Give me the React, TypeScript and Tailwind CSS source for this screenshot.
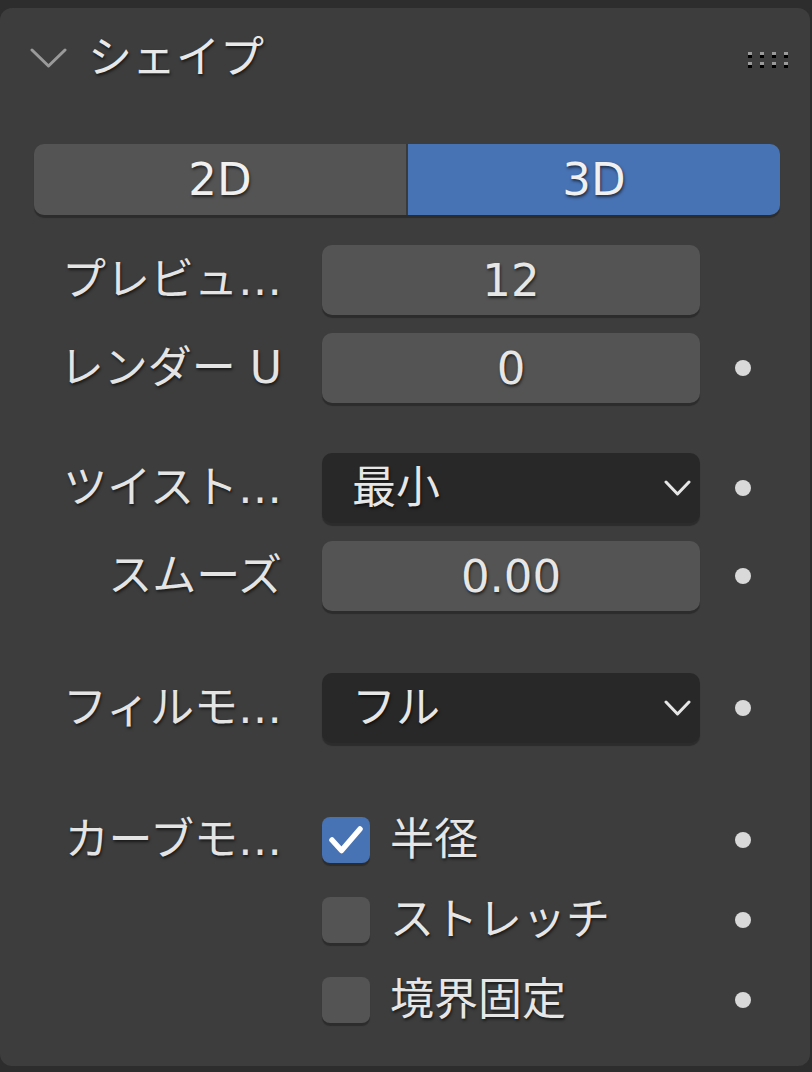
import { useState } from 'react';

const font = { fontFamily: '"DejaVu Sans", "Noto Sans CJK JP", sans-serif' };

function Dot({ show = true }: { show?: boolean }) {
  return (
    <div className="ml-[35px] w-4 h-4 flex items-center justify-center">
      {show && <div className="w-4 h-4 rounded-full bg-[#d9d9d9]" />}
    </div>
  );
}

function Label({ text }: { text: string }) {
  return (
    <div className="w-[248px] text-right text-[44px] leading-none text-[#e4e4e4] [text-shadow:1px_2px_3px_rgba(0,0,0,0.6)] whitespace-nowrap">
      {text}
    </div>
  );
}

function NumberRow({ label, value, dot = true, className = '' }: { label: string; value: string; dot?: boolean; className?: string }) {
  return (
    <div className={`flex items-center ${className}`}>
      <Label text={label} />
      <div className="ml-[40px] w-[378px] h-[70px] rounded-[10px] bg-[#545454] shadow-[0_3px_1px_rgba(0,0,0,0.28)] flex items-center justify-center text-[45px] leading-none text-[#e6e6e6] [text-shadow:1px_2px_3px_rgba(0,0,0,0.6)]">
        {value}
      </div>
      <Dot show={dot} />
    </div>
  );
}

function SelectRow({ label, value, className = '' }: { label: string; value: string; className?: string }) {
  return (
    <div className={`flex items-center ${className}`}>
      <Label text={label} />
      <div className="ml-[40px] w-[378px] h-[70px] rounded-[10px] bg-[#282828] shadow-[0_3px_1px_rgba(0,0,0,0.28)] flex items-center pl-[30px] pr-[9px]">
        <span className="flex-1 text-[44px] leading-none text-[#e6e6e6] [text-shadow:1px_2px_3px_rgba(0,0,0,0.6)]">{value}</span>
        <svg width="27" height="16" viewBox="0 0 27 16" fill="none">
          <polyline points="2,2 13.5,14 25,2" stroke="#e6e6e6" strokeWidth="3" strokeLinecap="round" strokeLinejoin="round" />
        </svg>
      </div>
      <Dot />
    </div>
  );
}

function CheckRow({ label, text, checked, className = '' }: { label: string; text: string; checked: boolean; className?: string }) {
  return (
    <div className={`flex items-center h-[46px] ${className}`}>
      <Label text={label} />
      <div className="ml-[40px] w-[378px] flex items-center">
        <div
          className={`w-[48px] h-[46px] rounded-[8px] shadow-[0_3px_1px_rgba(0,0,0,0.28)] flex items-center justify-center ${
            checked ? 'bg-[#4772b3]' : 'bg-[#545454]'
          }`}
        >
          {checked && (
            <svg width="48" height="46" viewBox="0 0 48 46" fill="none">
              <polyline points="10,23 19.5,33.5 38,12" stroke="#ffffff" strokeWidth="5.5" strokeLinecap="round" strokeLinejoin="round" />
            </svg>
          )}
        </div>
        <span className="ml-[20px] text-[44px] leading-none text-[#e6e6e6] [text-shadow:1px_2px_3px_rgba(0,0,0,0.6)]">{text}</span>
      </div>
      <Dot />
    </div>
  );
}

export default function App() {
  const [mode, setMode] = useState<'2D' | '3D'>('3D');

  return (
    <div className="w-[812px] h-[1072px] bg-[#2d2d2d] pt-[8px] pr-[2px] overflow-hidden" style={font}>
      <div className="h-[1058px] bg-[#3d3d3d] rounded-[12px]">
        {/* Header */}
        <div className="h-[100px] flex items-center pl-[30px] pr-[22px]">
          <svg width="37" height="20" viewBox="0 0 37 20" fill="none">
            <polyline points="2,2 18.5,18 35,2" stroke="#9a9a9a" strokeWidth="3" strokeLinecap="round" strokeLinejoin="round" />
          </svg>
          <span className="ml-[21px] flex-1 text-[44px] leading-none text-[#e8e8e8] [text-shadow:1px_2px_3px_rgba(0,0,0,0.6)]">シェイプ</span>
          <div className="grid grid-cols-4 gap-x-[8px] gap-y-[7px]">
            {Array.from({ length: 8 }).map((_, i) => (
              <div key={i} className="w-[4px] h-[3px] bg-[#9a9a9a] shadow-[0_3px_0_#000]" />
            ))}
          </div>
        </div>

        <div className="pl-[34px]">
          {/* 2D / 3D toggle */}
          <div className="mt-[36px] w-[746px] h-[71px] flex rounded-[10px] shadow-[0_3px_1px_rgba(0,0,0,0.28)] overflow-hidden">
            {(['2D', '3D'] as const).map((m, i) => (
              <button
                key={m}
                onClick={() => setMode(m)}
                className={`flex-1 flex items-center justify-center text-[45px] leading-none text-[#f0f0f0] [text-shadow:1px_2px_3px_rgba(0,0,0,0.6)] ${
                  mode === m ? 'bg-[#4772b3]' : 'bg-[#545454]'
                } ${i === 0 ? 'border-r-2 border-[#3a3a3a]' : ''}`}
              >
                {m}
              </button>
            ))}
          </div>

          <NumberRow className="mt-[30px]" label="プレビュ…" value="12" dot={false} />
          <NumberRow className="mt-[18px]" label="レンダー U" value="0" />

          <SelectRow className="mt-[50px]" label="ツイスト…" value="最小" />
          <NumberRow className="mt-[18px]" label="スムーズ" value="0.00" />

          <SelectRow className="mt-[62px]" label="フィルモ…" value="フル" />

          <CheckRow className="mt-[74px]" label="カーブモ…" text="半径" checked />
          <CheckRow className="mt-[34px]" label="" text="ストレッチ" checked={false} />
          <CheckRow className="mt-[34px]" label="" text="境界固定" checked={false} />
        </div>
      </div>
    </div>
  );
}
